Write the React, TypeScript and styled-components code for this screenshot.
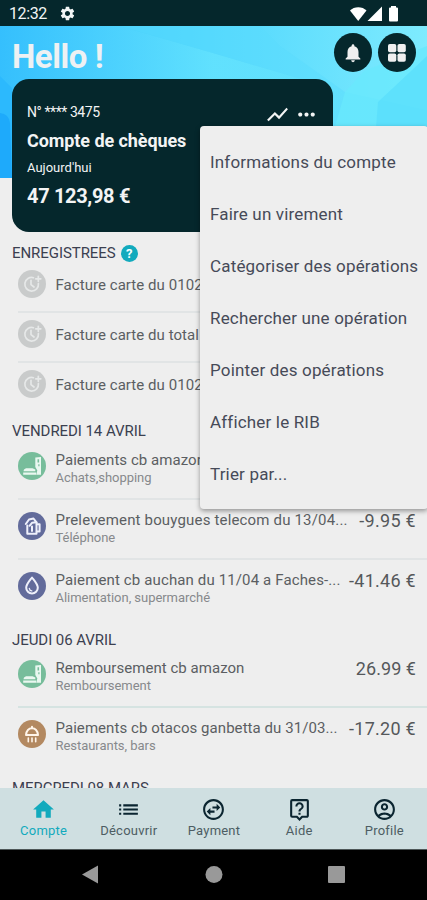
import React from 'react';
import styled, { createGlobalStyle } from 'styled-components';
import {
  MdSettings,
  MdNotifications,
  MdShowChart,
  MdMoreHoriz,
  MdHome,
  MdList,
  MdOutlineSwapHorizontalCircle,
  MdOutlineLiveHelp,
  MdOutlineAccountCircle,
} from 'react-icons/md';

const colors = {
  dark: '#05272c',
  surface: '#eeeeee',
  teal: '#12aabd',
  nav: '#cfdfe1',
  line: '#e1e4e5',
};

const GlobalStyle = createGlobalStyle`
  * { box-sizing: border-box; }
  body { margin: 0; font-family: Roboto, "Liberation Sans", sans-serif; }
`;

const Phone = styled.div`
  position: relative;
  display: flex;
  flex-direction: column;
  width: 427px;
  height: 900px;
  overflow: hidden;
  background: ${colors.surface};
`;

const StatusBar = styled.header`
  flex: none;
  height: 26px;
  padding: 1px 27px 0 9px;
  display: flex;
  align-items: center;
  background: ${colors.dark};
  color: #f2f5f5;
`;

const Clock = styled.span`
  width: 50px;
  font-size: 16px;
  letter-spacing: -0.4px;
`;

const StatusIcons = styled.div`
  margin-left: auto;
  display: flex;
`;

const Main = styled.main`
  flex: 1;
  min-height: 0;
  overflow: hidden;
`;

const Hero = styled.section`
  position: relative;
  height: 152px;
  padding: 7px 11px 0 12px;
`;

const HeroArt = styled.svg`
  position: absolute;
  inset: 0;
`;

const HeroTop = styled.div`
  position: relative;
  display: flex;
  justify-content: space-between;
  height: 46px;
`;

const Greeting = styled.h1`
  margin: 4px 0 0;
  font-size: 33px;
  line-height: 40px;
  font-weight: 700;
  letter-spacing: -0.45px;
  color: #eef1f3;
`;

const RoundButtons = styled.div`
  display: flex;
  gap: 6px;
`;

const RoundButton = styled.button`
  width: 38px;
  height: 39px;
  padding: 0;
  border: 0;
  border-radius: 50%;
  display: flex;
  align-items: center;
  justify-content: center;
  background: ${colors.dark};
  color: #f0f0f0;
`;

const AccountCard = styled.article`
  position: relative;
  width: 321px;
  height: 153px;
  padding: 23px 14px 0 15px;
  border-radius: 17px;
  background: ${colors.dark};
  color: #f3f4f4;
`;

const CardHeader = styled.div`
  display: flex;
  justify-content: space-between;
  height: 24px;
`;

const CardNumber = styled.span`
  margin-top: 1px;
  font-size: 14px;
  line-height: 18px;
  letter-spacing: -0.42px;
`;

const CardActions = styled.span`
  display: flex;
  gap: 4px;
`;

const CardLine = styled.p<{ $size: number; $height: number; $bold?: boolean; $spacing?: number }>`
  margin: 0;
  font-size: ${(p) => p.$size}px;
  line-height: ${(p) => p.$height}px;
  font-weight: ${(p) => (p.$bold ? 700 : 400)};
  letter-spacing: ${(p) => p.$spacing ?? 0}px;
`;

const Group = styled.section<{ $gap: number }>`
  padding-top: ${(p) => p.$gap}px;
`;

const GroupTitle = styled.h2`
  height: 19px;
  margin: 0;
  padding-left: 12px;
  display: flex;
  align-items: center;
  gap: 5px;
  font-size: 15px;
  font-weight: 400;
  letter-spacing: -0.06px;
  color: #3b4050;
`;

const HelpDot = styled.span`
  width: 17px;
  height: 17px;
  border-radius: 50%;
  background: ${colors.teal};
  color: #f4ffff;
  font-size: 13px;
  line-height: 17px;
  font-weight: 700;
  text-align: center;
`;

const Row = styled.div<{ $height: number; $pad: number; $line?: string }>`
  height: ${(p) => p.$height}px;
  margin-left: 18px;
  padding: ${(p) => p.$pad}px 11px 0 0;
  display: flex;
  align-items: flex-start;
  border-bottom: 2px solid ${(p) => p.$line ?? 'transparent'};
`;

const Badge = styled.span<{ $color: string }>`
  flex: none;
  width: 28px;
  height: 28px;
  margin-right: 9.5px;
  border-radius: 50%;
  background: ${(p) => p.$color};
`;

const RowText = styled.div<{ $centered?: boolean }>`
  flex: 1;
  min-width: 0;
  margin-top: ${(p) => (p.$centered ? 6 : -1.5)}px;
  white-space: nowrap;
`;

const RowTitle = styled.div<{ $spacing?: number }>`
  font-size: 15px;
  line-height: 18px;
  letter-spacing: ${(p) => p.$spacing ?? 0.05}px;
  color: #5b5e62;
`;

const RowSub = styled.div`
  font-size: 13px;
  line-height: 18px;
  letter-spacing: -0.04px;
  color: #87898c;
`;

const Amount = styled.span<{ $spacing: number }>`
  margin-top: -1px;
  font-size: 18px;
  line-height: 20px;
  letter-spacing: ${(p) => p.$spacing}px;
  color: #55585b;
`;

const Menu = styled.ul`
  position: absolute;
  top: 126px;
  left: 200px;
  width: 228px;
  height: 383px;
  margin: 0;
  padding: 10px 0 9px 10px;
  list-style: none;
  border-radius: 4px;
  background: ${colors.surface};
  box-shadow: 0 2px 5px rgba(0, 0, 0, 0.38);
`;

const MenuItem = styled.li`
  font-size: 17px;
  line-height: 52px;
  letter-spacing: 0.17px;
  color: #464a58;
`;

const TabBar = styled.nav`
  flex: none;
  height: 61px;
  display: grid;
  grid-template-columns: repeat(5, 1fr);
  padding: 9px 0 0 1px;
  background: ${colors.nav};
`;

const Tab = styled.a<{ $active?: boolean }>`
  display: flex;
  flex-direction: column;
  align-items: center;
  font-size: 13px;
  line-height: 18px;
  letter-spacing: 0.22px;
  color: ${(p) => (p.$active ? colors.teal : '#4d5d63')};

  svg {
    color: ${(p) => (p.$active ? colors.teal : '#0b2530')};
  }
`;

const SystemBar = styled.footer`
  flex: none;
  height: 51px;
  border-top: 1px solid #4e5758;
  background: #000;
`;

type BadgeKind = 'clock' | 'shop' | 'phone' | 'drop' | 'food';

const badgeColors: Record<BadgeKind, string> = {
  clock: '#c9cbcb',
  shop: '#77bd9b',
  phone: '#626b9b',
  drop: '#626b9b',
  food: '#b38961',
};

const badgeArt: Record<BadgeKind, React.ReactNode> = {
  clock: (
    <g fill="none" stroke="#e6e8e8" strokeWidth="1.7" strokeLinecap="round">
      <path d="M15.5 7.7A6.8 6.8 0 1 0 20.4 13.5" />
      <path d="M13 10.3v4.4l3 2.3" />
      <path d="M20.3 6.3v5M17.8 8.8h5" />
    </g>
  ),
  shop: (
    <g fill="#e9f7f0">
      <path
        fillRule="evenodd"
        d="M17.300 5.500L23 5V22.700H18.300L19.300 18.500L17.300 15zM19.500 7.300v3.200h1.600V7.300zM20.300 12.300v2h1.200v-2z"
      />
      <path d="M6 17.600L8 16.300H14.500L17.300 17.600V19.200H5.500zM5.200 20.600h13v2.200h-13z" />
    </g>
  ),
  phone: (
    <g fill="none" stroke="#eef0fb" strokeWidth="2" strokeLinejoin="round" strokeLinecap="round">
      <path d="M9.300 13.500V21.800h9.200V10.500" />
      <path d="M7.800 12L11 7.500L15.500 6.500L18.500 10.300L14 10.800L11.500 13.800" />
      <path d="M18.800 12.300h2.800v7.200h-2.800M14 14.500v4.500" />
    </g>
  ),
  drop: (
    <g fill="none" stroke="#eef0fb" strokeWidth="2" strokeLinejoin="round" strokeLinecap="round">
      <path d="M14 5.500c2.500 3.200 5.800 6.500 5.800 10.200a5.800 5.800 0 0 1-11.600 0C8.200 12 11.500 8.700 14 5.500z" />
      <path d="M11.300 16.300c.2 1.500 1.200 2.400 2.500 2.600" strokeWidth="1.300" />
    </g>
  ),
  food: (
    <g fill="none" stroke="#fff5ea" strokeWidth="2" strokeLinejoin="round" strokeLinecap="round">
      <path d="M14 6.800v1M8 15c.5-4 2.500-6.700 6-6.700s5.500 2.700 6 6.700z" />
      <path d="M10.300 18v3.800M14 18v3.800M17.700 18v3.800" strokeWidth="1.600" />
    </g>
  ),
};

function KindBadge({ kind }: { kind: BadgeKind }) {
  return (
    <Badge $color={badgeColors[kind]}>
      <svg width="28" height="28" viewBox="0 0 28 28">{badgeArt[kind]}</svg>
    </Badge>
  );
}

interface Operation {
  kind: BadgeKind;
  title: string;
  sub: string;
  amount?: string;
  spacing?: number;
  amountSpacing?: number;
}

const pending = ['Facture carte du 010223', 'Facture carte du total', 'Facture carte du 010223'];

const april14: Operation[] = [
  { kind: 'shop', title: 'Paiements cb amazon', sub: 'Achats,shopping' },
  { kind: 'phone', title: 'Prelevement bouygues telecom du 13/04...', sub: 'Téléphone', amount: '-9.95 €', spacing: 0.17, amountSpacing: 0.3 },
  { kind: 'drop', title: 'Paiement cb auchan du 11/04 a Faches-...', sub: 'Alimentation, supermarché', amount: '-41.46 €', spacing: 0.13, amountSpacing: 0.28 },
];

const april06: Operation[] = [
  { kind: 'shop', title: 'Remboursement cb amazon', sub: 'Remboursement', amount: '26.99 €', spacing: 0.04, amountSpacing: 0.05 },
  { kind: 'food', title: 'Paiements cb otacos ganbetta du 31/03...', sub: 'Restaurants, bars', amount: '-17.20 €', spacing: 0.06, amountSpacing: 0.28 },
];

const menuItems = [
  'Informations du compte',
  'Faire un virement',
  'Catégoriser des opérations',
  'Rechercher une opération',
  'Pointer des opérations',
  'Afficher le RIB',
  'Trier par...',
];

function Operations({ items, line, first }: { items: Operation[]; line: string; first: number }) {
  return (
    <>
      {items.map((op, i) => (
        <Row
          key={op.title}
          $height={i === 0 ? 48 + first : 60}
          $pad={i === 0 ? first : 12}
          $line={i < items.length - 1 ? line : undefined}
        >
          <KindBadge kind={op.kind} />
          <RowText>
            <RowTitle $spacing={op.spacing}>{op.title}</RowTitle>
            <RowSub>{op.sub}</RowSub>
          </RowText>
          {op.amount && <Amount $spacing={op.amountSpacing ?? 0}>{op.amount}</Amount>}
        </Row>
      ))}
    </>
  );
}

export default function App() {
  return (
    <Phone>
      <GlobalStyle />
      <StatusBar>
        <Clock>12:32</Clock>
        <MdSettings size={17} />
        <StatusIcons>
          <svg width="51" height="18" viewBox="0 0 51 18" fill="#fff">
            <path d="M1 5.500C5 1 13.500 1 17.500 5.500L9.200 16z" />
            <path d="M33 1.500V16H18.500z" />
            <path d="M40 3.500q0-1 1-1h1V1h5v1.500h1q1 0 1 1V15.500q0 1-1 1h-7q-1 0-1-1z" />
          </svg>
        </StatusIcons>
      </StatusBar>

      <Main>
        <Hero>
          <HeroArt width="427" height="152" viewBox="0 0 427 152">
            <defs>
              <linearGradient id="sky" x1="0" y1="0" x2="1" y2="0">
                <stop offset="0" stopColor="#35c0fd" />
                <stop offset="0.45" stopColor="#4dd5fd" />
                <stop offset="1" stopColor="#7eebfe" />
              </linearGradient>
              <linearGradient id="beam" x1="0" y1="0" x2="1" y2="0">
                <stop offset="0" stopColor="#35bffd" />
                <stop offset="0.5" stopColor="#66e4fe" />
                <stop offset="1" stopColor="#5adcfc" />
              </linearGradient>
            </defs>
            <rect width="427" height="152" fill="url(#sky)" />
            <path d="M120 0L213 27L345 66L427 84V152H0V0z" fill="url(#beam)" opacity="0.75" />
            <path d="M213 0H260L280 20L345 66L213 27L120 0z" fill="#5adcfe" opacity="0.5" />
            <path d="M345 66L364 45L427 20V152H320z" fill="#69e8fd" opacity="0.8" />
            <path d="M378 76L427 30V152H372z" fill="#55dcfb" opacity="0.6" />
            <path d="M0 50L12 62V152H0z" fill="#2cb9fd" />
            <path d="M0 87Q9 88 10 97L12 152H0z" fill="#1eaafb" />
          </HeroArt>
          <HeroTop>
            <Greeting>Hello !</Greeting>
            <RoundButtons>
              <RoundButton aria-label="Notifications">
                <MdNotifications size={22} />
              </RoundButton>
              <RoundButton aria-label="Services">
                <svg width="18" height="18" viewBox="0 0 18 18" fill="currentColor">
                  <rect x="0" y="0" width="8.300" height="8.300" rx="1.800" />
                  <rect x="9.500" y="0" width="8.300" height="8.300" rx="1.800" />
                  <rect x="0" y="9.500" width="8.300" height="8.300" rx="1.800" />
                  <rect x="9.500" y="9.500" width="8.300" height="8.300" rx="1.800" />
                </svg>
              </RoundButton>
            </RoundButtons>
          </HeroTop>
          <AccountCard>
            <CardHeader>
              <CardNumber>N° **** 3475</CardNumber>
              <CardActions>
                <MdShowChart size={25} />
                <MdMoreHoriz size={25} />
              </CardActions>
            </CardHeader>
            <CardLine $size={18} $height={30} $bold $spacing={-0.08}>Compte de chèques</CardLine>
            <CardLine $size={13} $height={23}>Aujourd'hui</CardLine>
            <CardLine $size={20} $height={34} $bold $spacing={-0.33}>47 123,98 €</CardLine>
          </AccountCard>
        </Hero>

        <Group $gap={65.5}>
          <GroupTitle>
            ENREGISTREES <HelpDot>?</HelpDot>
          </GroupTitle>
          {pending.map((title, i) => (
            <Row key={i} $height={50} $pad={7.5} $line={i < 2 ? colors.line : undefined}>
              <KindBadge kind="clock" />
              <RowText $centered>
                <RowTitle>{title}</RowTitle>
              </RowText>
            </Row>
          ))}
        </Group>

        <Group $gap={8.5}>
          <GroupTitle>VENDREDI 14 AVRIL</GroupTitle>
          <Operations items={april14} line={colors.line} first={12} />
        </Group>

        <Group $gap={10}>
          <GroupTitle>JEUDI 06 AVRIL</GroupTitle>
          <Operations items={april06} line="#d5e3e1" first={11} />
        </Group>

        <Group $gap={10}>
          <GroupTitle>MERCREDI 08 MARS</GroupTitle>
        </Group>
      </Main>

      <TabBar>
        <Tab $active><MdHome size={25} />Compte</Tab>
        <Tab><MdList size={25} />Découvrir</Tab>
        <Tab><MdOutlineSwapHorizontalCircle size={25} />Payment</Tab>
        <Tab><MdOutlineLiveHelp size={25} />Aide</Tab>
        <Tab><MdOutlineAccountCircle size={25} />Profile</Tab>
      </TabBar>

      <SystemBar>
        <svg width="427" height="50" viewBox="0 0 427 50" fill="#999">
          <path d="M82 24.500L98 15.500V33.500z" />
          <circle cx="214" cy="24.500" r="8.500" />
          <rect x="328" y="16" width="17" height="17" rx="1" />
        </svg>
      </SystemBar>

      <Menu>
        {menuItems.map((item) => (
          <MenuItem key={item}>{item}</MenuItem>
        ))}
      </Menu>
    </Phone>
  );
}
